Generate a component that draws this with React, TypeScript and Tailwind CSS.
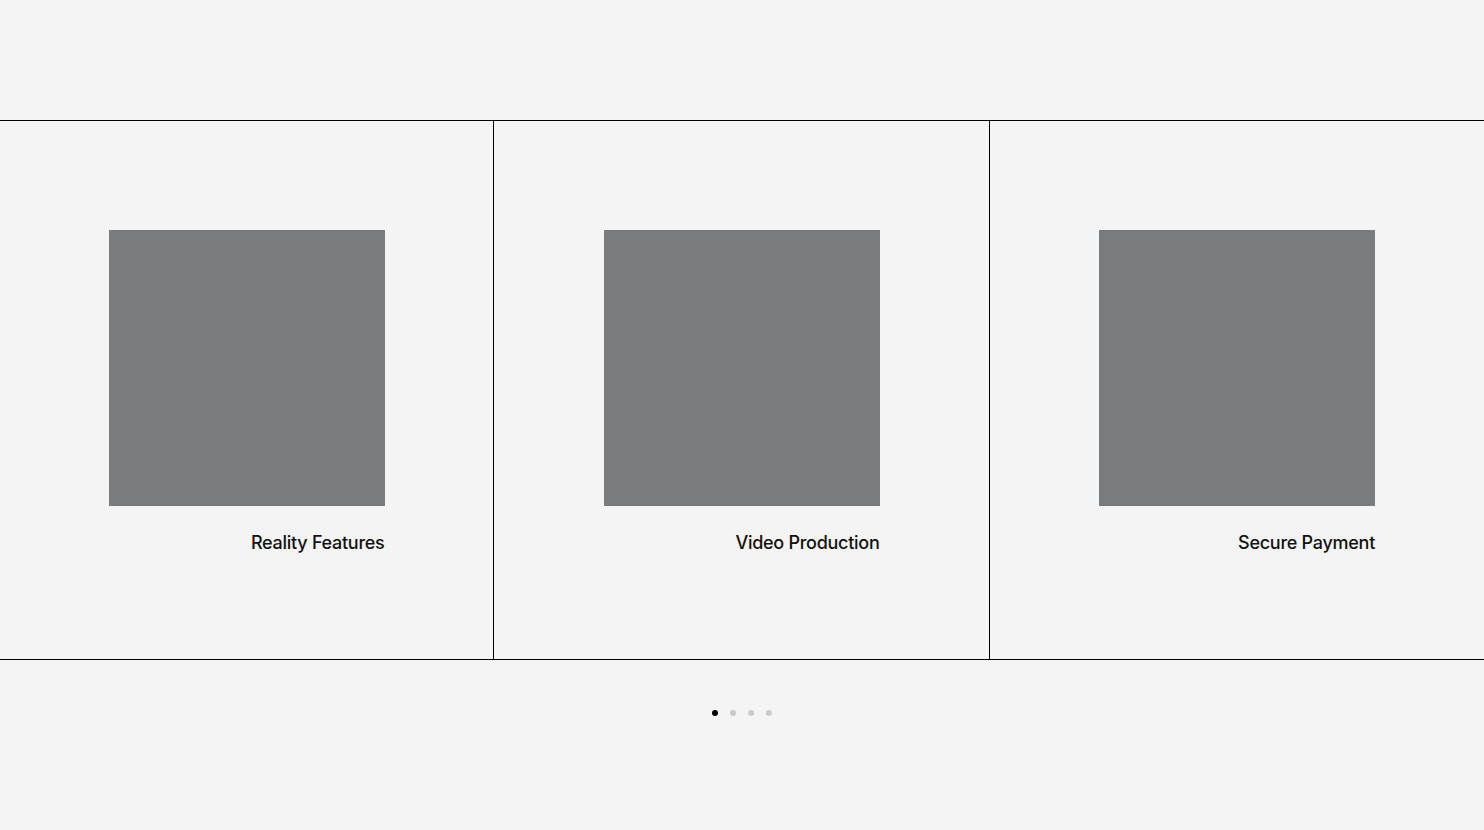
const cards = ['Reality Features', 'Video Production', 'Secure Payment'];

export default function App() {
  return (
    <div className="min-h-[830px] bg-[#f4f4f4] pt-[120px] font-['Inter','Liberation_Sans',sans-serif]">
      {/* carousel track */}
      <div className="grid h-[540px] grid-cols-[494px_496px_1fr] border-y border-black">
        {cards.map((title, i) => (
          <div key={title} className={i < 2 ? 'border-r border-black pt-[109px]' : 'pt-[109px]'}>
            <div className="mx-auto w-[276px]">
              <div className="h-[276px] w-[276px] bg-[#7a7b7d]"></div>
              <p className="mt-[23px] text-right text-[18px] leading-7 font-medium tracking-[-0.015em] text-[#111]">
                {title}
              </p>
            </div>
          </div>
        ))}
      </div>

      {/* pagination */}
      <div className="mt-[50px] flex justify-center gap-3">
        {[0, 1, 2, 3].map((d) => (
          <span
            key={d}
            className={d === 0 ? 'h-1.5 w-1.5 rounded-full bg-black' : 'h-1.5 w-1.5 rounded-full bg-[#c9c9c9]'}
          ></span>
        ))}
      </div>
    </div>
  );
}
